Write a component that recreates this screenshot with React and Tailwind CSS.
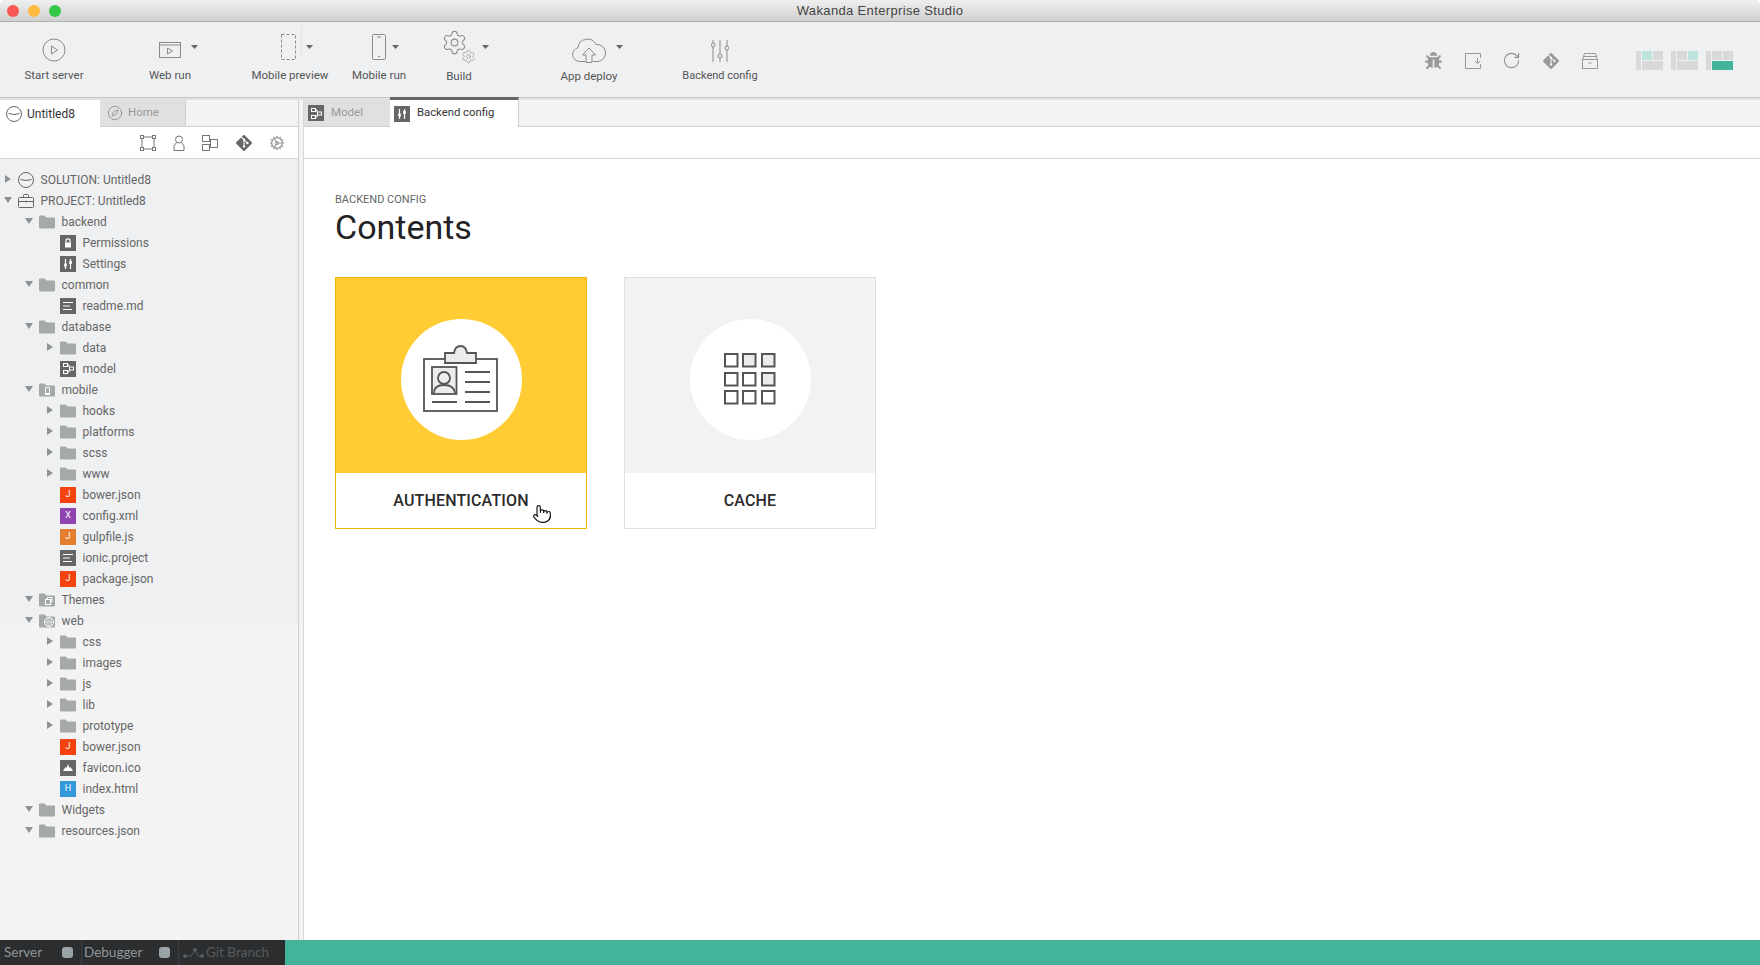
import { Compass, Pointer, Settings, Cog, RotateCw } from 'lucide-react';
import { FaBug } from 'react-icons/fa';
import { SiGit } from 'react-icons/si';

const ui = { fontFamily: 'Roboto, "Liberation Sans", sans-serif' };

const TREE = [
  { d: 0, n: 'SOLUTION: Untitled8', c: 'r', i: 'solution' },
  { d: 0, n: 'PROJECT: Untitled8', c: 'd', i: 'project' },
  { d: 1, n: 'backend', c: 'd', i: 'folder' },
  { d: 2, n: 'Permissions', i: 'lock' },
  { d: 2, n: 'Settings', i: 'sliders' },
  { d: 1, n: 'common', c: 'd', i: 'folder' },
  { d: 2, n: 'readme.md', i: 'lines' },
  { d: 1, n: 'database', c: 'd', i: 'folder' },
  { d: 2, n: 'data', c: 'r', i: 'folder' },
  { d: 2, n: 'model', i: 'model' },
  { d: 1, n: 'mobile', c: 'd', i: 'mobile' },
  { d: 2, n: 'hooks', c: 'r', i: 'folder' },
  { d: 2, n: 'platforms', c: 'r', i: 'folder' },
  { d: 2, n: 'scss', c: 'r', i: 'folder' },
  { d: 2, n: 'www', c: 'r', i: 'folder' },
  { d: 2, n: 'bower.json', i: 'jred' },
  { d: 2, n: 'config.xml', i: 'xml' },
  { d: 2, n: 'gulpfile.js', i: 'jorange' },
  { d: 2, n: 'ionic.project', i: 'lines' },
  { d: 2, n: 'package.json', i: 'jred' },
  { d: 1, n: 'Themes', c: 'd', i: 'themes' },
  { d: 1, n: 'web', c: 'd', i: 'web' },
  { d: 2, n: 'css', c: 'r', i: 'folder' },
  { d: 2, n: 'images', c: 'r', i: 'folder' },
  { d: 2, n: 'js', c: 'r', i: 'folder' },
  { d: 2, n: 'lib', c: 'r', i: 'folder' },
  { d: 2, n: 'prototype', c: 'r', i: 'folder' },
  { d: 2, n: 'bower.json', i: 'jred' },
  { d: 2, n: 'favicon.ico', i: 'image' },
  { d: 2, n: 'index.html', i: 'html' },
  { d: 1, n: 'Widgets', c: 'd', i: 'folder' },
  { d: 1, n: 'resources.json', c: 'd', i: 'folder' },
];

const DEPTH = ['pl-0', 'pl-[21px]', 'pl-[42px]'];

function Folder({ children }) {
  return (
    <svg width="16" height="14" viewBox="0 0 16 14" className="block">
      <path d="M0 1.5Q0 .5 1 .5H5.5L7.5 2.5H15Q16 2.5 16 3.5V12.5Q16 13.5 15 13.5H1Q0 13.5 0 12.5Z" fill="#a6a9aa" />
      {children}
    </svg>
  );
}

function Badge({ bg = 'bg-[#666666]', children }) {
  return (
    <span className={`flex h-4 w-4 items-center justify-center text-[9px] font-normal leading-none text-white ${bg}`}>
      {children}
    </span>
  );
}

function SlidersGlyph() {
  return (
    <svg width="10" height="10" viewBox="0 0 10 10" fill="none" stroke="#fff" strokeWidth="1.2">
      <path d="M2.5 0V10M7.5 0V10" />
      <rect x="1.2" y="4.5" width="2.6" height="3" fill="#fff" stroke="none" />
      <rect x="6.2" y="2" width="2.6" height="3" fill="#fff" stroke="none" />
    </svg>
  );
}

function ModelGlyph() {
  return (
    <svg width="11" height="11" viewBox="0 0 11 11" fill="none" stroke="#fff" strokeWidth="1">
      <rect x=".5" y=".5" width="4" height="3" />
      <rect x=".5" y="7.5" width="4" height="3" />
      <rect x="6.5" y="4" width="4" height="3" />
      <path d="M4.5 2H6V4M4.5 9H6V7" />
    </svg>
  );
}

function LinesGlyph() {
  return (
    <svg width="10" height="8" viewBox="0 0 10 8" stroke="#fff" strokeWidth="1">
      <path d="M0 .5H10M0 4H7M0 7.5H9" />
    </svg>
  );
}

function TreeIcon({ type }) {
  switch (type) {
    case 'solution':
      return (
        <svg width="16" height="16" viewBox="0 0 16 16" fill="none" stroke="#666" strokeWidth="1" className="block">
          <circle cx="8" cy="8" r="7.5" />
          <path d="M2.5 7.5Q8 9.5 13.5 7.5" />
        </svg>
      );
    case 'project':
      return (
        <svg width="16" height="14" viewBox="0 0 16 14" fill="none" stroke="#666" strokeWidth="1" className="block">
          <rect x=".5" y="3.5" width="15" height="10" rx="1" />
          <path d="M5.5 3.5V1.5Q5.5 .5 6.5 .5H9.5Q10.5 .5 10.5 1.5V3.5M.5 7.5H15.5M8 6.5V8.5" />
        </svg>
      );
    case 'folder':
      return <Folder />;
    case 'mobile':
      return (
        <Folder>
          <rect x="6" y="4" width="5" height="8" rx=".5" fill="#fff" />
          <rect x="7" y="5" width="3" height="5" fill="#a6a9aa" />
        </Folder>
      );
    case 'themes':
      return (
        <Folder>
          <rect x="6.5" y="6.5" width="5" height="5" fill="none" stroke="#fff" />
          <path d="M8.5 6.5V4.5H13V9H11.5" fill="none" stroke="#fff" />
        </Folder>
      );
    case 'web':
      return (
        <Folder>
          <circle cx="10" cy="8" r="4.5" fill="none" stroke="#fff" />
          <path d="M10 3.5V12.5M5.5 8H14.5M8 4V12M12 4V12" stroke="#fff" strokeWidth=".6" fill="none" />
        </Folder>
      );
    case 'lock':
      return (
        <Badge>
          <svg width="8" height="10" viewBox="0 0 8 10" fill="none">
            <path d="M2 4.5V2.5Q2 .8 4 .8T6 2.5V4.5" stroke="#fff" strokeWidth="1.2" />
            <rect x="1" y="4.5" width="6" height="5" fill="#fff" />
          </svg>
        </Badge>
      );
    case 'sliders':
      return <Badge><SlidersGlyph /></Badge>;
    case 'lines':
      return <Badge><LinesGlyph /></Badge>;
    case 'model':
      return <Badge><ModelGlyph /></Badge>;
    case 'jred':
      return <Badge bg="bg-[#f4430f]">J</Badge>;
    case 'jorange':
      return <Badge bg="bg-[#e67e30]">J</Badge>;
    case 'xml':
      return <Badge bg="bg-[#8e44ad]">X</Badge>;
    case 'html':
      return <Badge bg="bg-[#3498db]">H</Badge>;
    case 'image':
      return (
        <Badge>
          <svg width="10" height="7" viewBox="0 0 10 7" fill="#fff">
            <path d="M0 7 2.5 3 3.5 4 5 0 6.5 4 7.5 3 10 7Z" />
          </svg>
        </Badge>
      );
    default:
      return null;
  }
}

function Chevron({ dir }) {
  if (dir === 'r') {
    return (
      <svg width="6" height="8" viewBox="0 0 6 8" fill="#8f9294"><path d="M0 0 6 4 0 8Z" /></svg>
    );
  }
  return (
    <svg width="8" height="6" viewBox="0 0 8 6" fill="#8f9294"><path d="M0 0H8L4 6Z" /></svg>
  );
}

function TreeRow({ item }) {
  return (
    <div className={`flex h-[21px] items-center ${DEPTH[item.d]}`}>
      <span className="flex h-3 w-4 -translate-y-px items-center justify-center">
        {item.c && <Chevron dir={item.c} />}
      </span>
      <span className="ml-[2px] flex w-4 justify-center">
        <TreeIcon type={item.i} />
      </span>
      <span className="ml-[6.5px] whitespace-nowrap text-[12px] text-[#666666]">{item.n}</span>
    </div>
  );
}

function Caret() {
  return (
    <svg width="7" height="4" viewBox="0 0 7 4" fill="#666" className="block"><path d="M0 0H7L3.5 4Z" /></svg>
  );
}

function ToolItem({ label, width, className = '', labelClass = 'mt-px', caret, children }) {
  return (
    <div className={`flex shrink-0 flex-col items-center ${width} ${className}`}>
      <div className="relative flex h-[36px] items-center justify-center">
        {children}
        {caret}
      </div>
      <span className={`whitespace-nowrap text-[11.5px] leading-[14px] text-[#555555] ${labelClass}`}>{label}</span>
    </div>
  );
}

function LayoutThumb({ active, strong }) {
  const on = strong ? 'bg-[#43b39b]' : 'bg-[#bce3dc]';
  return (
    <div className="flex h-[19px] w-[27px] gap-px">
      <div className="w-[5px] bg-[#d9d9d9]" />
      <div className="flex flex-1 flex-col gap-px">
        <div className="flex h-[9px] gap-px">
          <div className={`flex-1 ${active === 'a' ? on : 'bg-[#d9d9d9]'}`} />
          <div className={`flex-1 ${active === 'b' ? on : 'bg-[#d9d9d9]'}`} />
        </div>
        <div className={`flex-1 ${active === 'c' ? on : 'bg-[#d9d9d9]'}`} />
      </div>
    </div>
  );
}

function Toolbar() {
  const stroke = '#8a8a8a';
  return (
    <div className="flex h-[75px] items-start bg-[#eff0f2] pl-[14px] pt-[9px]">
      <ToolItem label="Start server" width="w-[80px]">
        <svg width="24" height="24" viewBox="0 0 24 24" fill="none" stroke={stroke} className="translate-y-px">
          <circle cx="12" cy="12" r="11" />
          <path d="M9.5 8 15.5 12 9.5 16Z" />
        </svg>
      </ToolItem>
      <ToolItem label="Web run" width="w-[70px]" className="ml-[41px]" caret={<span className="absolute left-[32px] top-[14px]"><Caret /></span>}>
        <svg width="22" height="16" viewBox="0 0 22 16" fill="none" stroke={stroke} className="translate-y-px">
          <rect x=".5" y=".5" width="21" height="15" />
          <path d="M.5 3H21.5" />
          <path d="M8.5 6 13.5 9 8.5 12Z" />
        </svg>
      </ToolItem>
      <ToolItem
        label="Mobile preview"
        width="w-[100px]"
        className="ml-[35px]"
        caret={(
          <>
            <span className="absolute left-[18px] top-[-5px] h-[33px] w-px bg-[#e2e3e5]" />
            <span className="absolute left-[23px] top-[14px]"><Caret /></span>
          </>
        )}
      >
        <svg width="15" height="26" viewBox="0 0 15 26" fill="none" stroke={stroke} className="-translate-x-[2px] -translate-y-[2px]">
          <rect x=".5" y=".5" width="14" height="25" strokeDasharray="3 2" />
        </svg>
      </ToolItem>
      <ToolItem label="Mobile run" width="w-[70px]" className="ml-[4px]" caret={<span className="absolute left-[20px] top-[14px]"><Caret /></span>}>
        <svg width="14" height="26" viewBox="0 0 14 26" fill="none" stroke={stroke} className="-translate-y-[2px]">
          <rect x=".5" y=".5" width="13" height="25" rx="1" />
          <path d="M5 3H9M6 22.5H8" />
        </svg>
      </ToolItem>
      <ToolItem label="Build" width="w-[60px]" className="ml-[15px]" labelClass="mt-[2px]" caret={<span className="absolute left-[41px] top-[14px]"><Caret /></span>}>
        <span className="relative block h-[36px] w-[36px] -translate-y-[2px]">
          <Settings size={27} strokeWidth={0.9} color={stroke} />
          <span className="absolute left-[20px] top-[20px]"><Settings size={15} strokeWidth={1} color={stroke} /></span>
        </span>
      </ToolItem>
      <ToolItem label="App deploy" width="w-[80px]" className="ml-[60px]" labelClass="mt-[2px]" caret={<span className="absolute left-[44px] top-[14px]"><Caret /></span>}>
        <svg width="34" height="25" viewBox="0 0 34 25" fill="none" stroke={stroke} className="translate-y-px">
          <path d="M13 23.500H7.500A7 7 0 0 1 6 9.700 9.500 9.500 0 0 1 24 6.500 8.500 8.500 0 0 1 26 23.500H21" />
          <path d="M14 24.500V17H10.500L17 10 23.500 17H20V24.500Z" />
        </svg>
      </ToolItem>
      <ToolItem label="Backend config" width="w-[100px]" className="ml-[41px]" labelClass="mt-[2px] text-[11px]">
        <svg width="18" height="22" viewBox="0 0 18 22" fill="#eff0f2" stroke={stroke} className="translate-y-[2px]">
          <path d="M2 0V22M9 0V22M16 0V22" />
          <circle cx="2" cy="5" r="2" />
          <circle cx="9" cy="16" r="2" />
          <circle cx="16" cy="8" r="2" />
        </svg>
      </ToolItem>

      <div className="ml-auto mt-[10px] flex h-[36px] items-center pr-[27px] pt-[3px]">
        <FaBug size={17} color="#999999" />
        <svg width="16" height="16" viewBox="0 0 16 16" fill="none" stroke="#999" className="ml-[23px]">
          <path d="M15.500 5V.5H.5V15.500H15.500V11" />
          <path d="M12.500 5V10M10 8 12.500 10.500 15 8" />
        </svg>
        <RotateCw size={19} strokeWidth={1.4} color="#909090" className="ml-[21px]" />
        <SiGit size={16} color="#999999" className="ml-[22px]" />
        <svg width="16" height="16" viewBox="0 0 16 16" fill="none" stroke="#999" className="ml-[23px]">
          <rect x=".5" y="6.500" width="15" height="9" />
          <path d="M.5 6.500 2.500.5H13.500L15.500 6.500M2 3.500H14M6.500 10H9.500" />
        </svg>
        <div className="ml-[38px] flex gap-[8px]">
          <LayoutThumb active="a" />
          <LayoutThumb active="b" />
          <LayoutThumb active="c" strong />
        </div>
      </div>
    </div>
  );
}

function Sidebar() {
  return (
    <aside className="flex w-[299px] shrink-0 flex-col border-r border-[#cfcfcf] bg-[#f3f3f3]">
      <div className="flex h-[27px] border-b border-[#cfcfcf]">
        <div className="-mb-px flex h-[27px] w-[100px] items-center gap-[5px] bg-white pl-[6px] text-[12px] text-[#333333]">
          <TreeIcon type="solution" />
          <span>Untitled8</span>
        </div>
        <div className="flex w-[86px] items-center gap-[5px] border-r border-[#cfcfcf] bg-[#e0e0e0] pl-[7px] text-[11.5px] text-[#999999]">
          <Compass size={16} strokeWidth={1} color="#777777" />
          <span>Home</span>
        </div>
      </div>
      <div className="flex h-[32px] items-center border-b border-[#d4d4d4] bg-white pl-[140px]">
        <svg width="16" height="16" viewBox="0 0 16 16" fill="#fff" stroke="#777">
          <rect x="2" y="2" width="12" height="12" />
          <rect x=".5" y=".5" width="3" height="3" />
          <rect x="12.500" y=".5" width="3" height="3" />
          <rect x=".5" y="12.500" width="3" height="3" />
          <rect x="12.500" y="12.500" width="3" height="3" />
        </svg>
        <svg width="12" height="16" viewBox="0 0 12 16" fill="none" stroke="#777" className="ml-[17px]">
          <circle cx="6" cy="4.500" r="3.500" />
          <path d="M3.500 7.500 1 11V15.500H11V11L8.500 7.500" />
        </svg>
        <svg width="16" height="16" viewBox="0 0 16 16" fill="none" stroke="#777" className="ml-[17px]">
          <rect x=".5" y=".5" width="7" height="6" />
          <rect x=".5" y="9.500" width="7" height="6" />
          <rect x="8.500" y="4.500" width="7" height="8" />
        </svg>
        <SiGit size={16} color="#666666" className="ml-[18px]" />
        <Cog size={16} strokeWidth={1.8} color="#999999" className="ml-[17px]" />
      </div>
      <div className="flex-1 bg-[linear-gradient(#eff0f2_464px,#f3f3f3_464px)] pt-[10px]" style={ui}>
        {TREE.map((item, i) => <TreeRow key={i} item={item} />)}
      </div>
    </aside>
  );
}

function IdIcon() {
  return (
    <svg width="76" height="68" viewBox="0 0 76 68" fill="none" stroke="#555555" strokeWidth="1.8">
      <rect x="1" y="14" width="73" height="52" fill="#fff" />
      <path d="M22 18V8H31Q32 1 37.500 1T44 8H53V18Z" fill="#ececec" />
      <rect x="9" y="22" width="24.500" height="27" fill="#ececec" />
      <circle cx="21" cy="33" r="6" fill="#ececec" />
      <path d="M11 48Q11 40 21 40T32 48" fill="#ececec" />
      <path d="M42 27H67M42 37H67M42 47H67M42 57H67M9 57H34" />
    </svg>
  );
}

function GridIcon() {
  const shaded = ['1-0', '2-0', '2-1'];
  const xs = [1, 19, 38];
  const ys = [1, 20, 38];
  return (
    <svg width="53" height="52" viewBox="0 0 53 52" stroke="#555555" strokeWidth="2">
      {ys.map((y, r) => xs.map((x, c) => (
        <rect key={`${c}-${r}`} x={x} y={y} width="12.500" height="12.500" fill={shaded.includes(`${c}-${r}`) ? '#ececec' : '#fff'} />
      )))}
    </svg>
  );
}

function Card({ title, hot, children }) {
  return (
    <div className={`relative flex h-[252px] w-[252px] flex-col border ${hot ? 'border-[#f4b400]' : 'border-[#e0e0e0]'}`}>
      <div className={`flex h-[195px] items-center justify-center pt-[7px] ${hot ? 'bg-[#ffcc33]' : 'bg-[#f2f2f2]'}`}>
        <div className="flex h-[121px] w-[121px] items-center justify-center rounded-full bg-white">
          {children}
        </div>
      </div>
      <div className="flex flex-1 items-center justify-center text-[16px] font-medium tracking-[0.15px] text-[#2b2b2b]">
        {title}
      </div>
      {hot && (
        <Pointer size={20} strokeWidth={1.4} color="#111111" fill="#ffffff" className="absolute left-[196px] top-[226px]" />
      )}
    </div>
  );
}

function Main() {
  return (
    <main className="ml-[4px] flex min-w-0 flex-1 flex-col border-l border-[#d8d8d8] bg-white">
      <div className="flex h-[27px] border-b border-[#cfcfcf] bg-[#f3f3f3]">
        <div className="flex w-[86px] items-center gap-[7px] bg-[#e0e0e0] pl-[4px] text-[11.5px] text-[#999999]">
          <Badge><ModelGlyph /></Badge>
          <span>Model</span>
        </div>
        <div className="-mb-px -mt-[3px] flex h-[30px] w-[129px] items-center gap-[7px] border-r border-t-[3px] border-[#cfcfcf] border-t-[#666666] bg-white pl-[4px] text-[11.3px] text-[#333333]">
          <Badge><SlidersGlyph /></Badge>
          <span>Backend config</span>
        </div>
      </div>
      <div className="h-[32px] border-b border-[#d4d4d4]" />
      <div className="flex-1 pl-[31px] pt-[34px]">
        <p className="text-[11px] leading-[14px] text-[#666666]">BACKEND CONFIG</p>
        <h1 className="text-[34px] leading-[40px] text-[#222222]">Contents</h1>
        <div className="mt-[30px] flex gap-[37px]">
          <Card title="AUTHENTICATION" hot><IdIcon /></Card>
          <Card title="CACHE"><GridIcon /></Card>
        </div>
      </div>
    </main>
  );
}

function StatusDot() {
  return <span className="h-[11px] w-[11px] rounded-[3px] bg-[#9aa3a8]" />;
}

function StatusBar() {
  return (
    <footer className="flex h-[25px] shrink-0 bg-[#43b39b]" style={{ fontFamily: 'Lato, sans-serif' }}>
      <div className="flex w-[285px] items-center bg-[#2b2d2f] text-[13.5px] text-[#8f979b]">
        <div className="flex h-full w-[82px] items-center border-r border-[#3c3f41] pl-[4px]">
          <span className="w-[58px]">Server</span>
          <StatusDot />
        </div>
        <div className="flex h-full w-[97px] items-center border-r border-[#3c3f41] pl-[2px]">
          <span className="w-[75px]">Debugger</span>
          <StatusDot />
        </div>
        <div className="flex items-center pl-[4px] text-[#575c5f]">
          <svg width="21" height="10" viewBox="0 0 21 10" fill="#575c5f" stroke="#575c5f">
            <circle cx="2" cy="8" r="1.500" />
            <circle cx="12" cy="2" r="1.500" />
            <circle cx="19" cy="8" r="1.500" />
            <path d="M2 8H8L12 2 15 8H19" fill="none" />
          </svg>
          <span className="ml-[2px]">Git Branch</span>
        </div>
      </div>
    </footer>
  );
}

export default function App() {
  return (
    <div className="flex h-[965px] w-[1760px] flex-col overflow-hidden bg-white" style={ui}>
      <header className="relative flex h-[22px] shrink-0 items-center justify-center rounded-t-[5px] border-b border-[#b0b0b0] bg-gradient-to-b from-[#efefef] to-[#d0d0d0]">
        <div className="absolute left-[7px] top-[5px] flex gap-[9px]">
          <span className="h-[12px] w-[12px] rounded-full bg-[#fc5753]" />
          <span className="h-[12px] w-[12px] rounded-full bg-[#fdbc40]" />
          <span className="h-[12px] w-[12px] rounded-full bg-[#34c84a]" />
        </div>
        <span className="text-[13px] tracking-[0.35px] text-[#444444]" style={{ fontFamily: '"Liberation Sans", sans-serif' }}>
          Wakanda Enterprise Studio
        </span>
      </header>
      <Toolbar />
      <div className="h-[3px] shrink-0 border-t border-[#c8c8c8] bg-[#e0e0e0]" />
      <div className="flex min-h-0 flex-1 bg-[#f3f3f3]">
        <Sidebar />
        <Main />
      </div>
      <StatusBar />
    </div>
  );
}
